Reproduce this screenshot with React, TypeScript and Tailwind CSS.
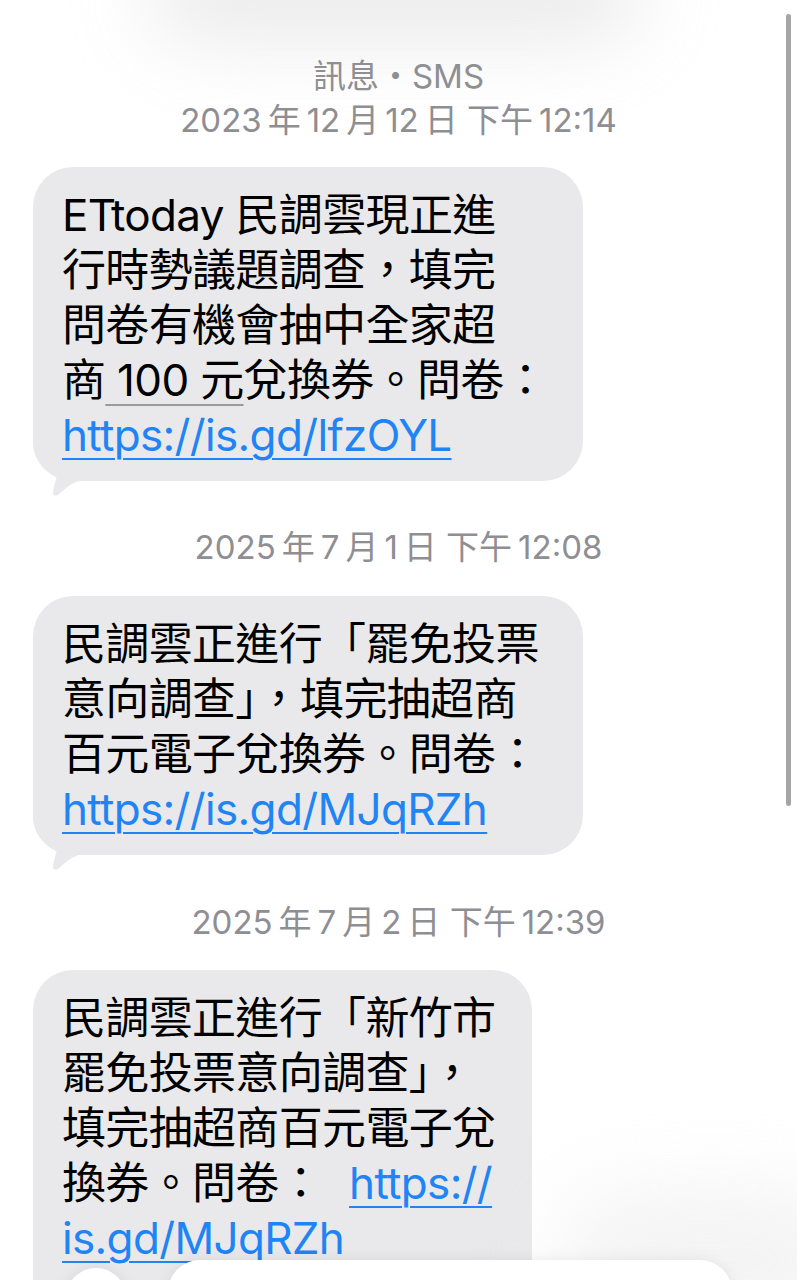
import React from 'react';

const FONT = { fontFamily: 'Inter, "Noto Sans CJK TC", "Noto Sans", sans-serif' };

const Tail: React.FC = () => (
  <svg
    className="absolute left-0 bottom-[-16px]"
    width="60"
    height="66"
    viewBox="0 0 60 66"
    fill="#e9e9eb"
  >
    <path d="M0 0 L0 10 C0 28 10 40 24 45 C22 52 20 58 20 63 C21 65 23 65 25 64 C32 58 38 52 46 50 L60 50 L60 0 Z" />
  </svg>
);

const Link: React.FC<{ children: React.ReactNode }> = ({ children }) => (
  <span className="text-[#2184f4] underline decoration-2 underline-offset-[7px]">{children}</span>
);

const Bubble: React.FC<{ width: string; tail?: boolean; pb?: string; children: React.ReactNode }> = ({
  width,
  tail = true,
  pb = 'pb-[18px]',
  children,
}) => (
  <div className={`relative ${width}`}>
    <div className={`relative z-10 rounded-[40px] bg-[#e9e9eb] pl-[29px] pr-4 pt-[21px] ${pb} text-[44px] leading-[55px] text-black tracking-[-0.015em]`}>
      {children}
    </div>
    {tail && <Tail />}
  </div>
);

const Stamp: React.FC<{ children: React.ReactNode }> = ({ children }) => (
  <div className="text-center text-[33px] leading-[40px] text-[#8e8e93]">{children}</div>
);

const Line: React.FC<{ children: React.ReactNode }> = ({ children }) => (
  <div className="whitespace-nowrap">{children}</div>
);

export default function App() {
  return (
    <div className="relative w-[797px] h-[1280px] overflow-hidden bg-white" style={FONT}>
      {/* top blurred header glass */}
      <div className="absolute left-[150px] top-[-55px] w-[490px] h-[95px] rounded-full bg-[#dcdcdc] blur-2xl opacity-60" />

      {/* scroll indicator */}
      <div className="absolute left-[786px] top-[14px] w-[5px] h-[792px] rounded-full bg-[#a5a5a5]" />

      <div className="relative px-[33px] pt-[54px]">
        <div className="text-center text-[33px] leading-[44px] text-[#8e8e93]">
          <div>訊息・SMS</div>
          <div>2023&thinsp;年&thinsp;12&thinsp;月&thinsp;12&thinsp;日 下午&thinsp;12:14</div>
        </div>

        <div className="mt-[25px]">
          <Bubble width="w-[550px]">
            <Line>ETtoday 民調雲現正進</Line>
            <Line>行時勢議題調查，填完</Line>
            <Line>問卷有機會抽中全家超</Line>
            <Line>
              商
              <span className="underline decoration-[#9a9a9a] decoration-2 underline-offset-[8px]"> 100 元</span>
              兌換券。問卷：
            </Line>
            <Line>
              <Link>https://is.gd/lfzOYL</Link>
            </Line>
          </Bubble>
        </div>

        <div className="mt-[46px]">
          <Stamp>2025&thinsp;年&thinsp;7&thinsp;月&thinsp;1&thinsp;日 下午&thinsp;12:08</Stamp>
        </div>

        <div className="mt-[29px]">
          <Bubble width="w-[550px]">
            <Line>民調雲正進行「罷免投票</Line>
            <Line>意向調查」，填完抽超商</Line>
            <Line>百元電子兌換券。問卷：</Line>
            <Line>
              <Link>https://is.gd/MJqRZh</Link>
            </Line>
          </Bubble>
        </div>

        <div className="mt-[47px]">
          <Stamp>2025&thinsp;年&thinsp;7&thinsp;月&thinsp;2&thinsp;日 下午&thinsp;12:39</Stamp>
        </div>

        <div className="mt-[28px]">
          <Bubble width="w-[499px]" tail={false} pb="pb-[60px]">
            <Line>民調雲正進行「新竹市</Line>
            <Line>罷免投票意向調查」，</Line>
            <Line>填完抽超商百元電子兌</Line>
            <Line>
              換券。問卷：<span className="inline-block w-[27px]" />
              <Link>https://</Link>
            </Line>
            <Line>
              <Link>is.gd/MJqRZh</Link>
            </Line>
          </Bubble>
        </div>
      </div>

      {/* bottom input bar */}
      <div className="absolute z-20 left-[560px] top-[1190px] w-[300px] h-[140px] rounded-full bg-[#ececec] blur-2xl opacity-60" />
      <div className="absolute z-20 left-[66px] top-[1268px] w-[60px] h-[60px] rounded-full bg-white shadow-[0_0_16px_rgba(0,0,0,0.08)]" />
      <div className="absolute z-20 left-[168px] top-[1260px] w-[564px] h-[64px] rounded-[32px] bg-white shadow-[0_0_16px_rgba(0,0,0,0.08)]" />
    </div>
  );
}
